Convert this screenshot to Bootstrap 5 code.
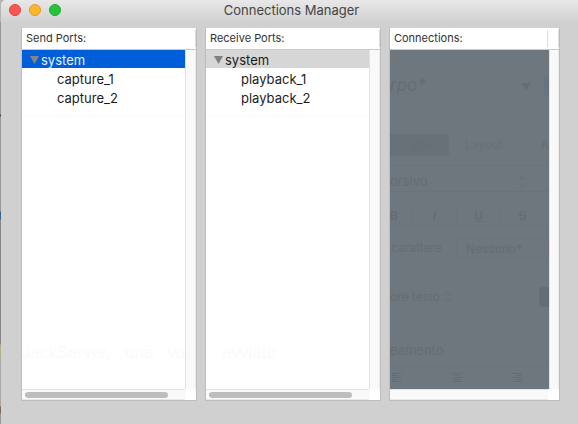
<!DOCTYPE html>
<html lang="en">
<head>
<meta charset="utf-8">
<meta name="viewport" content="width=device-width, initial-scale=1">
<title>Connections Manager</title>
<link href="https://cdn.jsdelivr.net/npm/bootstrap@5.3.0/dist/css/bootstrap.min.css" rel="stylesheet">
<style>
  body { background: linear-gradient(#b4b4b4 0 22px, #969696 22px 114px, #444 115px 116px, #999 117px 211px, #36648c 212px 219px, #858585 220px 344px, #b9ad85 345px 357px, #a8a8a8 358px 406px, #7d6951 407px 413px, #999 414px); font-family: Inter, "Liberation Sans", sans-serif; color: #1c1c1c; }
  .win { margin-left: 1px; background: #d0d0d0; border-radius: 5px 0 0 0; }
  .titlebar { height: 22px; padding-left: 8px; background: linear-gradient(#e8e8e8, #d1d1d1); border-radius: 5px 0 0 0; }
  .titlebar h1 { font-size: 13px; line-height: 20px; font-weight: 400; color: #444; padding-right: 56px; }
  .light { width: 12px; height: 12px; border-radius: 50%; border: 1px solid; }
  .light-close { background: #fc5652; border-color: #e2403d; }
  .light-min { background: #fdb62c; border-color: #df9b25; }
  .light-zoom { background: #28c33c; border-color: #1ea932; }
  .panels { gap: 8px; padding: 5px 18px 23px 20px; }
  .pane { flex: 176 1 0; min-width: 0; background: #fff; border: 1px solid #bdbdbd; border-top-color: #d0d0d0; }
  .pane-narrow { flex-grow: 171; }
  .pane-head { height: 22px; border-bottom: 1px solid #cacaca; padding: 2px 0 2px 4px; }
  .pane-head h2 { font-size: 11px; line-height: 17px; font-weight: 400; color: #333; }
  .head-end { width: 11px; border-right: 1px solid #dcdcdc; }
  .head-split { border-left: 1px solid #dcdcdc; width: 12px; }
  .vbar { width: 11px; background: #f9f9f9; border-left: 1px solid #e2e2e2; border-right: 1px solid #ececec; }
  .hbar { height: 11px; background: #f9f9f9; border-top: 1px solid #e2e2e2; border-bottom: 1px solid #e8e8e8; padding: 2px 3px; }
  .hthumb { width: 91%; height: 6px; border-radius: 3px; background: #bdbdbd; }
  .corner { width: 11px; }
  .tree, .tree ul { list-style: none; margin: 0; padding: 0; font-size: 13px; line-height: 19px; }
  .tree-root { height: 18px; width: 100%; border: 0; padding: 2px 0 0 8px; gap: 2px; background: #d6d6d6; color: #1c1c1c; line-height: 19px; text-align: left; }
  .tree-root.active { background: #005ed8; color: #e6efff; }
  .tree ul { padding-top: 2px; }
  .tree ul li { padding-left: 35px; }
  .seam { border-top: 1px solid #fbfbfb; }
  .echo { font-family: "Liberation Sans", Arial, sans-serif; font-size: 17px; line-height: 20px; color: #fafafa; padding-bottom: 26px; white-space: pre; }
  /* translucent area: the window behind shows through */
  .glass { background: #6f777e; color: #656c73; font-size: 12px; overflow: hidden; white-space: nowrap; }
  .g-row { display: flex; align-items: center; height: 20px; }
  .g-first { flex: none; }
  .glass svg { fill: none; stroke: currentColor; flex: none; display: block; }
  .g-title { margin-top: 26px; font-size: 17px; font-style: italic; }
  .g-title .g-first { width: 131px; }
  .g-title svg { fill: currentColor; stroke: none; }
  .g-swatch { width: 20px; height: 20px; border-radius: 4px; background: #667480; margin-left: 13px; flex: none; }
  .g-tabs { margin-top: 38px; height: 22px; }
  .g-tab { width: 59px; height: 22px; background: #697178; padding-left: 20px; line-height: 22px; color: #666e75; }
  .g-layout { margin-left: 16px; width: 76px; color: #697077; font-size: 12px; }
  .g-line { border-top: 1px solid #6c747b; margin-top: 9px; }
  .g-style { margin-top: 6px; border-bottom: 1px solid #6b737a; font-size: 13px; }
  .g-style .g-first { width: 128px; }
  .g-fmt { margin-top: 14px; border-bottom: 1px solid #6c747b; font-weight: 600; }
  .g-fmt span { width: 44px; text-align: center; border-left: 1px solid #6c747b; flex: none; }
  .g-fmt .g-first { width: 22px; border: 0; text-align: left; }
  .g-char { margin-top: 12px; }
  .g-char .g-first { width: 53px; padding-left: 1px; }
  .g-select { margin-left: 13px; padding-left: 9px; height: 20px; line-height: 19px; width: 110px; border: 1px solid #6c747b; border-radius: 3px; }
  .g-color { margin-top: 29px; }
  .g-color .g-first { width: 53px; }
  .g-dark { width: 20px; height: 20px; border-radius: 4px; background: #656d74; margin-left: 87px; flex: none; }
  .g-align-title { margin-top: 34px; font-size: 13px; }
  .g-align { margin-top: 6px; border-top: 1px solid #6c747b; padding-left: 2px; gap: 49px; }
</style>
<script src="https://cdn.jsdelivr.net/npm/bootstrap@5.3.0/dist/js/bootstrap.bundle.min.js"></script>
</head>
<body>
<main class="win d-flex flex-column min-vh-100">
  <header class="titlebar d-flex">
    <div class="d-flex gap-2 pt-1">
      <button type="button" class="light light-close p-0" aria-label="Close"></button>
      <button type="button" class="light light-min p-0" aria-label="Minimize"></button>
      <button type="button" class="light light-zoom p-0" aria-label="Zoom"></button>
    </div>
    <h1 class="flex-fill text-center m-0">Connections Manager</h1>
  </header>

  <div class="panels d-flex flex-fill">
    <section class="pane d-flex flex-column">
      <div class="pane-head d-flex justify-content-between"><h2 class="m-0">Send Ports:</h2><span class="head-end"></span></div>
      <div class="d-flex flex-fill">
        <div class="d-flex flex-column flex-fill overflow-hidden">
          <ul class="tree">
            <li><button type="button" class="tree-root active d-flex align-items-center" aria-expanded="true"><svg width="9" height="8" viewBox="0 0 9 8" aria-hidden="true"><path d="M0 0h9L4.500 8z" fill="#858585"/></svg>system</button>
              <ul><li>capture_1</li><li>capture_2</li></ul></li>
          </ul>
          <div class="seam mt-2"></div>
          <div class="echo mt-auto" aria-hidden="true">JackServer,   una   vo</div>
        </div>
        <div class="vbar"></div>
      </div>
      <div class="d-flex"><div class="hbar flex-fill"><div class="hthumb"></div></div><div class="corner"></div></div>
    </section>

    <section class="pane d-flex flex-column">
      <div class="pane-head d-flex justify-content-between"><h2 class="m-0">Receive Ports:</h2><span class="head-end"></span></div>
      <div class="d-flex flex-fill">
        <div class="d-flex flex-column flex-fill overflow-hidden">
          <ul class="tree">
            <li><button type="button" class="tree-root d-flex align-items-center" aria-expanded="true"><svg width="9" height="8" viewBox="0 0 9 8" aria-hidden="true"><path d="M0 0h9L4.500 8z" fill="#808080"/></svg>system</button>
              <ul><li>playback_1</li><li>playback_2</li></ul></li>
          </ul>
          <div class="seam mt-2"></div>
          <div class="echo mt-auto ps-3" aria-hidden="true">avviato</div>
        </div>
        <div class="vbar"></div>
      </div>
      <div class="d-flex"><div class="hbar flex-fill"><div class="hthumb"></div></div><div class="corner"></div></div>
    </section>

    <section class="pane pane-narrow d-flex flex-column">
      <div class="pane-head d-flex justify-content-between"><h2 class="m-0">Connections:</h2><span class="head-end head-split"></span></div>
      <div class="d-flex flex-fill">
        <div class="glass flex-fill" aria-hidden="true">
          <div class="g-row g-title"><span class="g-first">rpo*</span><svg width="10" height="7" viewBox="0 0 10 7"><path d="M0 0h10L5 7z"/></svg><span class="g-swatch"></span></div>
          <div class="g-row g-tabs"><span class="g-first g-tab">Stile</span><span class="g-layout">Layout</span><span>A</span></div>
          <div class="g-line"></div>
          <div class="g-row g-style"><span class="g-first">orsivo</span><svg width="9" height="12" viewBox="0 0 9 12"><path d="M1 4l3.500-3L8 4M1 8l3.500 3L8 8"/></svg></div>
          <div class="g-row g-fmt"><span class="g-first">B</span><span><i>I</i></span><span><u>U</u></span><span><s>S</s></span></div>
          <div class="g-row g-char"><span class="g-first">carattere</span><span class="g-select">Nessuno*</span></div>
          <div class="g-row g-color"><span class="g-first">ore testo</span><svg width="9" height="12" viewBox="0 0 9 12"><path d="M1 4l3.500-3L8 4M1 8l3.500 3L8 8"/></svg><span class="g-dark"></span></div>
          <div class="g-row g-align-title"><span>eamento</span></div>
          <div class="g-row g-align">
            <svg width="11" height="9" viewBox="0 0 11 9"><path d="M0 .5h10M0 2.500h6M0 4.500h9M0 6.500h6M0 8.500h10"/></svg>
            <svg width="11" height="9" viewBox="0 0 11 9"><path d="M0 .5h10M2 2.500h6M1 4.500h9M2 6.500h6M0 8.500h10"/></svg>
            <svg width="11" height="9" viewBox="0 0 11 9"><path d="M0 .5h10M4 2.500h6M1 4.500h9M4 6.500h6M0 8.500h10"/></svg>
          </div>
        </div>
        <div class="vbar"></div>
      </div>
      <div class="d-flex"><div class="hbar flex-fill"></div><div class="corner"></div></div>
    </section>
  </div>
</main>
</body>
</html>
